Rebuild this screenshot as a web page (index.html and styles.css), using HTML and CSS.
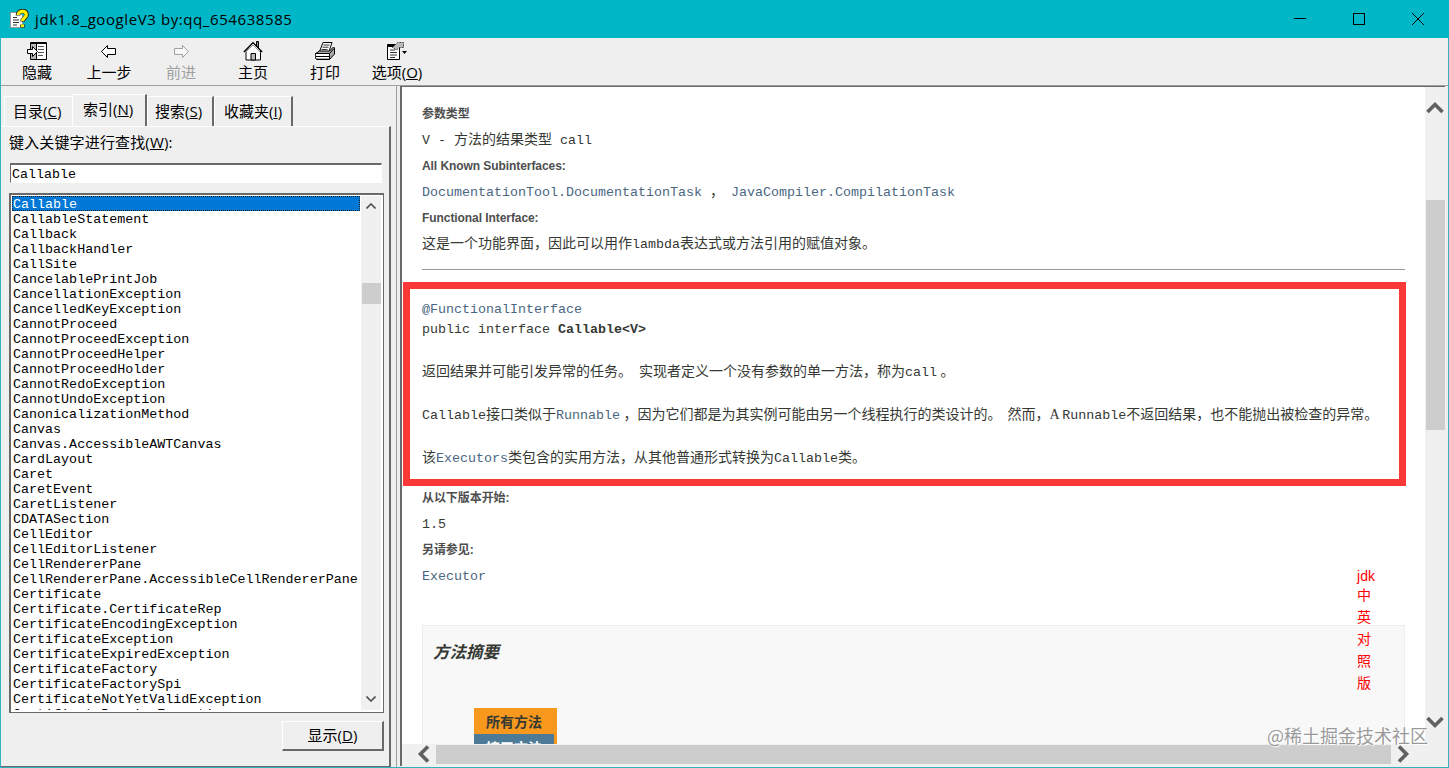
FILE: index.html
```
<!DOCTYPE html>
<html lang="zh-CN">
  <head>
    <meta charset="UTF-8" />
    <title>jdk1.8_googleV3 by:qq_654638585</title>
    <link rel="stylesheet" href="styles.css">
  </head>
  <body>
    <div class="window">
      <header class="titlebar">
        <svg class="app-icon" width="20" height="20" viewBox="0 0 20 20">
          <path d="M1.500 3.500h9l3 3v12h-12z" fill="#fff" stroke="#999" />
          <path d="M4 8.500h4M4 11h6M4 13.500h6M4 16h4" stroke="#333" />
          <path d="M9 6.500c0-3 2-4.500 4.500-4.500S17.500 3.500 17.500 6c0 3-4 3-4 6.500M13.500 15.500v3" fill="none" stroke="#222" stroke-width="4.600" />
          <path d="M9.200 6c0-2.500 2-3.700 4.300-3.700S17.300 3.500 17.300 6c0 2.500-3.800 3-3.800 6M13.500 15.500v2.500" fill="none" stroke="#ffef00" stroke-width="3.200" />
        </svg>
        <h1>jdk1.8_googleV3 by:qq_654638585</h1>
        <div class="window-buttons">
          <svg width="12" height="12"><path d="M0 5.500h12" /></svg>
          <svg width="12" height="12"><path d="M.5.5h11v11H.5z" /></svg>
          <svg width="12" height="12" class="smooth"><path d="M0 0l12 12M12 0L0 12" /></svg>
        </div>
      </header>

      <nav class="toolbar">
        <div class="tool">
          <svg width="20" height="20" viewBox="0 0 20 20">
            <path d="M3.500 1.500h16v17h-16z" fill="#fff" stroke="#000" />
            <path d="M4 2h5v16H4z" fill="#b8b8b8" />
            <path d="M4 2.500h15M9.500 2v16" stroke="#000" />
            <path d="M11 5.500h6M11 8.500h6M11 11.500h6M11 14.500h5" stroke="#555" />
            <path d="M.5 8.500h5v-3l5 5-5 5v-3h-5z" fill="#fff" stroke="#000" />
          </svg>
          <span>隐藏</span>
        </div>
        <div class="tool">
          <svg width="20" height="20" viewBox="0 0 20 20">
            <path d="M2.500 10.500l6-6v3h8v6h-8v3z" fill="#fff" stroke="#000" />
          </svg>
          <span>上一步</span>
        </div>
        <div class="tool disabled">
          <svg width="20" height="20" viewBox="0 0 20 20">
            <path d="M17.500 10.500l-6-6v3h-8v6h8v3z" fill="#f8f8f8" stroke="#a0a0a0" />
          </svg>
          <span>前进</span>
        </div>
        <div class="tool">
          <svg width="20" height="20" viewBox="0 0 20 20">
            <path d="M13.500 5V.5h2V8" fill="#888" stroke="#000" />
            <path d="M3 9.500v9.500h14.500V9.500L10 2z" fill="#fff" stroke="#000" />
            <path d="M.8 11L10 1.500l9.200 9.500" fill="none" stroke="#000" stroke-width="1.200" />
            <path d="M2.500 11.500L10 4l7.500 7.500" fill="none" stroke="#999" />
            <path d="M8 19v-6.500h4.500V19z" fill="#bbb" stroke="#000" />
          </svg>
          <span>主页</span>
        </div>
        <div class="tool">
          <svg width="20" height="20" viewBox="0 0 20 20">
            <path d="M4.500 10.500L8 1.500h9l-3 9z" fill="#fff" stroke="#000" />
            <path d="M8.500 4h6M7.500 6.200h6M6.500 8.500h6" stroke="#333" />
            <path d="M.7 12.500l3.800-2.500h10l4-4 1 1v6l-5 5.500H2l-1.300-1z" fill="#aaa" stroke="#000" />
            <path d="M1 12h13v5H1z" fill="#fff" />
            <path d="M.5 12.500h14l4.500-5M14.500 12.500v6M1 15.500h13" fill="none" stroke="#000" />
          </svg>
          <span>打印</span>
        </div>
        <div class="tool">
          <svg width="22" height="20" viewBox="0 0 22 20">
            <path d="M1.500 3.500h12v15h-12z" fill="#fff" stroke="#000" />
            <path d="M2 5h8" stroke="#000" stroke-width="2" />
            <path d="M4 9h5M4 11.500h7M4 14h7M4 16.500h5" stroke="#333" />
            <path d="M6.500 6.500l5-5h6v5h-4l-3 2.500z" fill="#bbb" stroke="#444" stroke-dasharray="2 1" />
            <path d="M16 10h5l-2.500 3z" fill="#000" />
          </svg>
          <span>选项(<u>O</u>)</span>
        </div>
      </nav>

      <main class="panes">
        <aside class="sidebar">
          <div class="tabs">
            <div class="tab tab-contents">目录(<u>C</u>)</div>
            <div class="tab tab-index active">索引(<u>N</u>)</div>
            <div class="tab tab-search">搜索(<u>S</u>)</div>
            <div class="tab tab-favorites">收藏夹(<u>I</u>)</div>
          </div>
          <div class="tab-panel">
            <label for="keyword">键入关键字进行查找(<u>W</u>):</label>
            <input type="text" id="keyword" value="Callable" />
            <div class="listbox">
              <ul>
                <li class="selected">Callable</li>
                <li>CallableStatement</li>
                <li>Callback</li>
                <li>CallbackHandler</li>
                <li>CallSite</li>
                <li>CancelablePrintJob</li>
                <li>CancellationException</li>
                <li>CancelledKeyException</li>
                <li>CannotProceed</li>
                <li>CannotProceedException</li>
                <li>CannotProceedHelper</li>
                <li>CannotProceedHolder</li>
                <li>CannotRedoException</li>
                <li>CannotUndoException</li>
                <li>CanonicalizationMethod</li>
                <li>Canvas</li>
                <li>Canvas.AccessibleAWTCanvas</li>
                <li>CardLayout</li>
                <li>Caret</li>
                <li>CaretEvent</li>
                <li>CaretListener</li>
                <li>CDATASection</li>
                <li>CellEditor</li>
                <li>CellEditorListener</li>
                <li>CellRendererPane</li>
                <li>CellRendererPane.AccessibleCellRendererPane</li>
                <li>Certificate</li>
                <li>Certificate.CertificateRep</li>
                <li>CertificateEncodingException</li>
                <li>CertificateException</li>
                <li>CertificateExpiredException</li>
                <li>CertificateFactory</li>
                <li>CertificateFactorySpi</li>
                <li>CertificateNotYetValidException</li>
                <li>CertificateParsingException</li>
              </ul>
              <div class="list-scroll">
                <svg width="10" height="6"><path d="M.5 5.500L5 1l4.500 4.500" /></svg>
                <div class="thumb"></div>
                <svg width="10" height="6"><path d="M.5.5L5 5 9.500.5" /></svg>
              </div>
            </div>
            <button class="show">显示(<u>D</u>)</button>
          </div>
        </aside>

        <section class="viewer">
          <article class="doc">
            <dl>
              <dt>参数类型</dt>
              <dd><code>V - </code>方法的结果类型<code> call</code></dd>
              <dt>All Known Subinterfaces:</dt>
              <dd><a><code>DocumentationTool.DocumentationTask</code></a><code> </code><span class="comma">，</span><a><code>JavaCompiler.CompilationTask</code></a></dd>
              <dt>Functional Interface:</dt>
              <dd>这是一个功能界面，因此可以用作<code>lambda</code>表达式或方法引用的赋值对象。</dd>
            </dl>
            <hr />
            <div class="highlight">
              <pre><a>@FunctionalInterface</a>
public interface <b>Callable&lt;V&gt;</b></pre>
              <p>返回结果并可能引发异常的任务。&nbsp; 实现者定义一个没有参数的单一方法，称为<code>call</code> 。</p>
              <p><code>Callable</code>接口类似于<a><code>Runnable</code></a> ，因为它们都是为其实例可能由另一个线程执行的类设计的。<span class="gap"> </span>然而，A <code>Runnable</code>不返回结果，也不能抛出被检查的异常。</p>
              <p>该<a><code>Executors</code></a>类包含的实用方法，从其他普通形式转换为<code>Callable</code>类。</p>
            </div>
            <dl class="since">
              <dt>从以下版本开始:</dt>
              <dd><code>1.5</code></dd>
              <dt>另请参见:</dt>
              <dd><a><code>Executor</code></a></dd>
            </dl>
            <div class="summary">
              <h3>方法摘要</h3>
              <div class="method-tabs">
                <div class="method-tab current">所有方法</div>
                <div class="method-tab">接口方法</div>
              </div>
            </div>
          </article>

          <div class="vscroll">
            <svg width="18" height="14"><path d="M1.500 12L9 4.500l7.500 7.500" /></svg>
            <div class="thumb"></div>
            <svg width="18" height="14"><path d="M1.500 2L9 9.500 16.500 2" /></svg>
          </div>
          <div class="hscroll">
            <svg width="14" height="18"><path d="M12 1.500L4.500 9l7.500 7.500" /></svg>
            <div class="thumb"></div>
            <svg width="14" height="18"><path d="M2 1.500L9.500 9 2 16.500" /></svg>
          </div>

          <div class="floating-note">
            <div class="note-title">jdk</div>
            中<br />英<br />对<br />照<br />版
          </div>
        </section>
      </main>
      <div class="watermark">@稀土掘金技术社区</div>
    </div>
  </body>
</html>
```
FILE: styles.css
```
* {
  box-sizing: border-box;
}

body {
  margin: 0;
  overflow: hidden;
  font-family: "Open Sans", "Noto Sans CJK SC", sans-serif;
  font-size: 15px;
  color: #000;
}

.window {
  position: relative;
  display: flex;
  flex-direction: column;
  width: 1449px;
  height: 768px;
  border: 1px solid #2fb3bf;
  border-top: none;
  background-color: #efefef;
}

.titlebar {
  flex: none;
  display: flex;
  align-items: center;
  height: 38px;
  margin: 0 -1px;
  padding-left: 9px;
  background-color: #00b7c7;
}

.titlebar h1 {
  margin: 0 0 0 6px;
  font-size: 15px;
  font-weight: 400;
  letter-spacing: 0.59px;
}

.window-buttons {
  display: flex;
  gap: 47px;
  margin-left: auto;
  padding-right: 25px;
}

.window-buttons svg {
  fill: none;
  stroke: #000;
  shape-rendering: crispEdges;
}

.window-buttons .smooth {
  shape-rendering: auto;
}

.toolbar {
  flex: none;
  display: flex;
  height: 48px;
  border-bottom: 1px solid #a0a0a0;
}

.tool {
  display: flex;
  flex-direction: column;
  align-items: center;
  width: 72px;
  padding-top: 3px;
  line-height: 22px;
  white-space: nowrap;
}

.tool svg {
  flex: none;
}

.disabled {
  color: #a0a0a0;
}

.panes {
  flex: 1;
  display: flex;
  min-height: 0;
}

.sidebar {
  flex: none;
  display: flex;
  flex-direction: column;
  width: 396px;
  padding-right: 5px;
  border-right: 1px solid #a0a0a0;
}

.tabs {
  display: flex;
  align-items: flex-end;
  height: 40px;
  padding-left: 3px;
}

.tab {
  height: 30px;
  padding-left: 8px;
  line-height: 29px;
  border-top: 1px solid #fff;
  border-left: 1px solid #fff;
  border-right: 2px solid #696969;
  white-space: nowrap;
}

.tab-contents {
  width: 68px;
  border-right: none;
}

.tab-index {
  width: 75px;
  padding-left: 10px;
}

.tab-search {
  width: 67px;
  padding-left: 7px;
}

.tab-favorites {
  width: 79px;
  padding-left: 9px;
}

.tab.active {
  height: 33px;
  margin-bottom: -1px;
  background-color: #efefef;
}

.tab-panel {
  flex: 1;
  display: flex;
  flex-direction: column;
  min-height: 0;
  padding: 6px 5px 14px 8px;
  border-top: 1px solid #fff;
  border-right: 2px solid #696969;
  border-bottom: 1px solid #696969;
}

.tab-panel label {
  height: 20px;
  line-height: 19px;
  letter-spacing: 0.15px;
}

#keyword {
  height: 20px;
  margin: 10px 2px 10px 1px;
  padding: 2px 0 0 1px;
  border: 1px solid #fff;
  border-top: 2px solid #696969;
  border-left: 1px solid #696969;
  outline: none;
  font: 13.333px "Liberation Mono", monospace;
}

.listbox {
  flex: none;
  display: flex;
  height: 520px;
  border: 2px solid #696969;
  border-right-width: 1px;
  border-bottom-width: 1px;
  padding: 1px 2px 2px 1px;
  background-color: #fff;
}

.listbox ul {
  flex: 1;
  margin: 0;
  padding: 0;
  overflow: hidden;
  list-style: none;
  font: 13.36px/15px "Liberation Mono", monospace;
}

.listbox li {
  height: 15px;
  padding: 1px 0 0 1px;
  white-space: nowrap;
}

.listbox .selected {
  outline: 1px dotted #222;
  outline-offset: -1px;
  background-color: #0078d7;
  color: #fff;
}

.list-scroll {
  display: flex;
  flex-direction: column;
  align-items: center;
  width: 20px;
  margin-left: 1px;
  padding: 7px 0 8px;
  background-color: #f0f0f0;
}

.list-scroll svg {
  fill: none;
  stroke: #505050;
  stroke-width: 1.6;
}

.list-scroll .thumb {
  width: 19px;
  height: 21px;
  margin: 74px 0 auto;
  background-color: #cdcdcd;
}

.show {
  flex: none;
  align-self: flex-end;
  width: 102px;
  height: 30px;
  margin-top: 8px;
  padding: 0 0 2px;
  border: 1px solid #fff;
  border-right: 2px solid #696969;
  border-bottom: 2px solid #696969;
  background-color: #efefef;
  font: inherit;
}

.viewer {
  position: relative;
  flex: 1;
  display: grid;
  grid-template-columns: 1fr 20px;
  grid-template-rows: 1fr 22px;
  margin: 0 3px 1px 3px;
  border-top: 1px solid #696969;
  border-left: 2px solid #696969;
  background-color: #fff;
  min-height: 0;
}

.doc {
  min-height: 0;
  padding: 13px 20px 0 20px;
  overflow: hidden;
  font-family: "Liberation Serif", "Noto Sans CJK SC", serif;
  font-size: 14px;
  color: #353833;
  white-space: nowrap;
}

.doc a {
  color: #4a6782;
}

.doc dl {
  margin: 0;
}

.doc dt {
  height: 28px;
  line-height: 28px;
  font-family: "Liberation Sans", "Noto Sans CJK SC", sans-serif;
  font-size: 12px;
  font-weight: 700;
  letter-spacing: -0.07px;
  color: #4e4e4e;
}

.doc dd {
  height: 24px;
  margin: 0;
  line-height: 24px;
}

.doc pre,
.doc code {
  font-family: "Liberation Mono", monospace;
  font-size: 13.333px;
}

.doc code {
  white-space: pre;
}

.comma {
  margin-right: 7px;
}

.gap {
  margin-right: 2.5px;
}

.doc hr {
  height: 1px;
  margin: 13px 0 12px;
  border: none;
  background-color: #999;
}

.highlight {
  height: 204px;
  margin: 0 -1px 0 -19px;
  padding: 11px 12px;
  border: 7px solid #fb3838;
}

.highlight pre {
  margin: 0;
  line-height: 20px;
}

.highlight p {
  height: 20px;
  margin: 23px 0 0;
  line-height: 20px;
}

.highlight pre + p {
  margin-top: 22px;
}

.doc .since {
  margin-top: -2px;
}

.summary {
  height: 200px;
  margin-top: 37px;
  padding: 14px 10px;
  border: 1px solid #ededed;
  background-color: #f8f8f8;
}

.summary h3 {
  margin: 0;
  font: italic 700 16.5px/22px "Noto Sans CJK SC", sans-serif;
}

.method-tabs {
  width: 83px;
  margin: 46px 0 0 41px;
  font: 700 14px/26px "Noto Sans CJK SC", sans-serif;
}

.method-tab {
  height: 26px;
  padding-left: 12px;
  border-right: 3px solid #f8981d;
  background-color: #4d7a97;
  color: #fff;
}

.method-tab.current {
  background-color: #f8981d;
  color: #353833;
}

.vscroll,
.hscroll {
  display: flex;
  align-items: center;
  background-color: #f0f0f0;
}

.vscroll svg,
.hscroll svg {
  flex: none;
  fill: none;
  stroke: #606060;
  stroke-width: 3.6;
}

.vscroll {
  flex-direction: column;
  padding: 13px 0 14px;
}

.vscroll .thumb {
  width: 19px;
  height: 230px;
  margin: 86px 0 auto;
  background-color: #cdcdcd;
}

.hscroll {
  grid-column: 1 / 3;
  padding: 0 34px 2px 14px;
}

.hscroll .thumb {
  flex: 1;
  height: 19px;
  margin: 0 6px 0 6px;
  background-color: #cdcdcd;
}

.floating-note {
  position: absolute;
  right: 70px;
  top: 478px;
  font: 14px/22px "Liberation Sans", "Noto Sans CJK SC", sans-serif;
  color: #f00;
}

.note-title {
  height: 19px;
}

.watermark {
  position: absolute;
  right: 20px;
  bottom: 19px;
  font: 18px/26px "Noto Sans CJK SC", sans-serif;
  color: rgba(120, 120, 120, 0.75);
  text-shadow: 1px 1px 1px #fff;
}
```
